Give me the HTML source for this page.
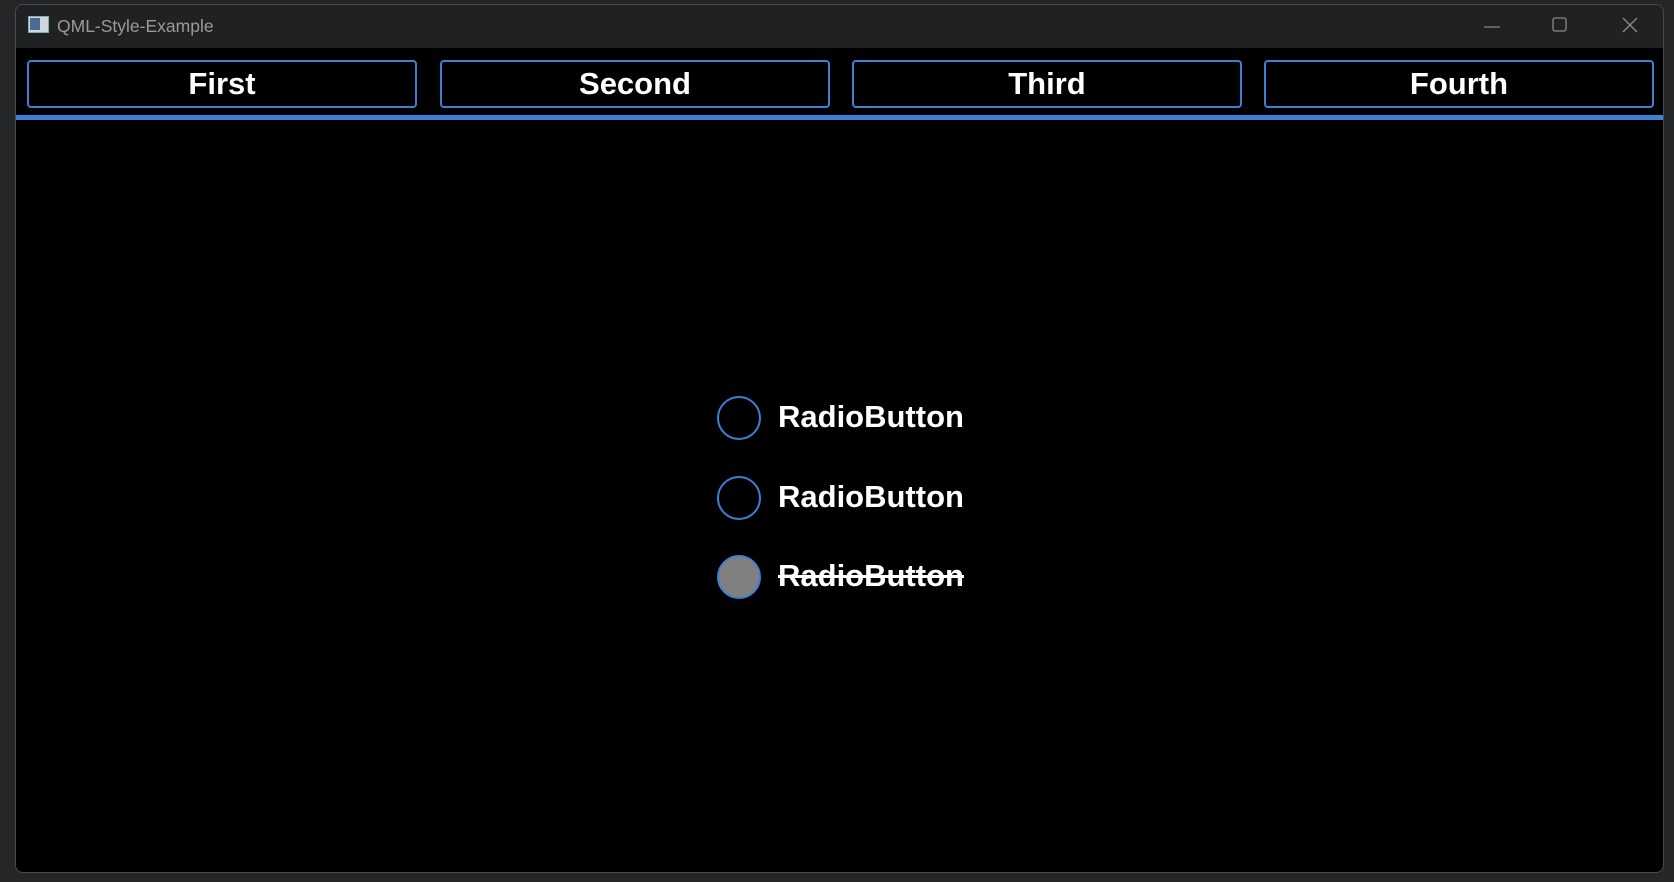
<!DOCTYPE html>
<html><head><meta charset="utf-8"><style>
html,body{margin:0;padding:0;width:1674px;height:882px;background:#252627;overflow:hidden;font-family:"Liberation Sans",Arial,sans-serif}
.win{position:absolute;left:15px;top:4px;width:1649px;height:869px;border:1px solid #4a4a4a;border-radius:8px;background:#000;overflow:hidden;box-sizing:border-box}
.tb{position:absolute;left:0;top:0;right:0;height:43px;background:#202122}
.title{position:absolute;left:41px;top:11px;color:#9a9a9a;font-size:17.5px}
.icon{position:absolute;left:12px;top:11px;width:19px;height:15px;background:#cfd6df;border:1px solid #8aa}
.icon:before{content:"";position:absolute;left:1px;top:1px;width:10px;height:12px;background:#4a6c90}
.btn{position:absolute;top:55px;height:48px;border:2px solid #3f7fd6;border-radius:4px;box-sizing:border-box;color:#fff;font-weight:bold;font-size:31px;text-align:center;line-height:44px}
.line{position:absolute;left:0;right:0;top:110px;height:5px;background:#3f7fd6}
.rb{position:absolute;left:701px;width:44px;height:44px;border:2px solid #3f7fd6;border-radius:50%;box-sizing:border-box}
.lbl{position:absolute;left:762px;color:#fff;font-weight:bold;font-size:31px;line-height:36px}
</style></head><body>
<div class="win">
 <div class="tb">
  <div class="icon"></div>
  <div class="title">QML-Style-Example</div>
  <svg style="position:absolute;left:1466px;top:9px" width="20" height="20"><line x1="2" y1="13" x2="18" y2="13" stroke="#8a8a8a" stroke-width="1.2"/></svg>
  <svg style="position:absolute;left:1534px;top:9px" width="20" height="20"><rect x="3" y="4" width="13" height="13" rx="2" fill="none" stroke="#8a8a8a" stroke-width="1.3"/></svg>
  <svg style="position:absolute;left:1604px;top:9px" width="20" height="20"><path d="M3 4L17 18M17 4L3 18" stroke="#8a8a8a" stroke-width="1.3"/></svg>
 </div>
 <div class="btn" style="left:11px;width:390px">First</div>
 <div class="btn" style="left:424px;width:390px">Second</div>
 <div class="btn" style="left:836px;width:390px">Third</div>
 <div class="btn" style="left:1248px;width:390px">Fourth</div>
 <div class="line"></div>
 <div class="rb" style="top:391px"></div>
 <div class="lbl" style="top:394px">RadioButton</div>
 <div class="rb" style="top:471px"></div>
 <div class="lbl" style="top:474px">RadioButton</div>
 <div class="rb" style="top:550px;background:#808080"></div>
 <div class="lbl" style="top:553px;text-decoration:line-through;text-decoration-thickness:3px">RadioButton</div>
</div>
</body></html>
